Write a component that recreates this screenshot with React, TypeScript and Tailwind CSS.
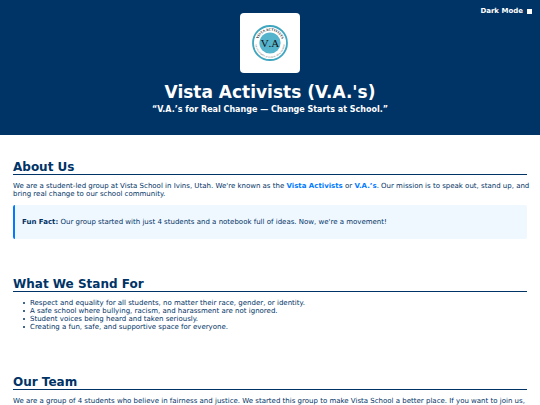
import { useState, type ReactNode } from 'react'
import clsx from 'clsx'

const values = [
  'Respect and equality for all students, no matter their race, gender, or identity.',
  'A safe school where bullying, racism, and harassment are not ignored.',
  'Student voices being heard and taken seriously.',
  'Creating a fun, safe, and supportive space for everyone.',
]

function Logo() {
  return (
    <svg viewBox="0 0 60 60" className="w-full" role="img" aria-label="Vista Activists logo">
      <defs>
        <path id="ring-top" d="M 17.6 30 A 12.4 12.4 0 0 1 42.4 30" />
        <path id="ring-bottom" d="M 15.2 30 A 14.8 14.8 0 0 0 44.8 30" />
      </defs>
      <circle cx="30" cy="30" r="17" fill="#fff" stroke="#3fa6c0" strokeWidth="1.8" />
      <circle cx="30" cy="30" r="10.6" fill="#55b3cb" />
      <g fontFamily="Liberation Serif, serif" textAnchor="middle">
        <text fontSize="3.6" fontWeight="bold" fill="#222">
          <textPath href="#ring-top" startOffset="50%">VISTA ACTIVISTS</textPath>
        </text>
        <text fontSize="2" fill="#444">
          <textPath href="#ring-bottom" startOffset="50%">CHANGE STARTS AT SCHOOL • REAL CHANGE</textPath>
        </text>
        <text x="30" y="34" fontSize="11" fill="#111" className="[font-kerning:none]">V.A</text>
      </g>
    </svg>
  )
}

function Section({ title, children }: { title: string; children: ReactNode }) {
  return (
    <section className="px-[13px] pt-[25px] pb-[13px]">
      <h2 className="mb-[7px] border-b border-current text-[12px] leading-[14px] font-bold">{title}</h2>
      {children}
    </section>
  )
}

export default function App() {
  const [dark, setDark] = useState(false)

  return (
    <div
      className={clsx(
        "min-h-screen font-['DejaVu_Sans',sans-serif] text-[7px] leading-[8px]",
        dark ? 'bg-[#121212] text-gray-100' : 'bg-white text-[#003366]'
      )}
    >
      <header className="relative flex flex-col items-center bg-[#003366] px-2 pt-[13px] pb-5 text-white">
        <label className="absolute top-[7px] right-2 flex items-center gap-1 font-bold">
          Dark Mode
          <input
            type="checkbox"
            checked={dark}
            onChange={(e) => setDark(e.target.checked)}
            className="size-[5px] appearance-none bg-white checked:bg-[#007bff]"
          />
        </label>
        <div className="w-[60px] rounded-[4px] bg-white">
          <Logo />
        </div>
        <h1 className="mt-[9px] text-[17px] leading-[20px] font-bold">Vista Activists (V.A.'s)</h1>
        <p className="mt-[3px] text-[8px] leading-[10px] font-bold">“V.A.’s for Real Change — Change Starts at School.”</p>
      </header>

      <main>
        <Section title="About Us">
          <p className="-mr-2">
            We are a student-led group at Vista School in Ivins, Utah. We're known as the{' '}
            <strong className="text-[#007bff]">Vista Activists</strong> or{' '}
            <strong className="text-[#007bff]">V.A.’s</strong>. Our mission is to speak out, stand up, and bring real
            change to our school community.
          </p>
          <div
            className={clsx(
              'mt-[7px] rounded-[2px] border-l-2 border-[#007bff] px-[7px] py-[13px]',
              dark ? 'bg-[#1e2a38]' : 'bg-[#f0f8ff]'
            )}
          >
            <p>
              <strong>Fun Fact:</strong> Our group started with just 4 students and a notebook full of ideas. Now, we're
              a movement!
            </p>
          </div>
        </Section>

        <Section title="What We Stand For">
          <ul className="mb-[6px] pl-[10px]">
            {values.map((value) => (
              <li
                key={value}
                className="flex items-center gap-[5px] before:size-[2px] before:rounded-full before:bg-current"
              >
                {value}
              </li>
            ))}
          </ul>
        </Section>

        <Section title="Our Team">
          <p className="-mr-2">
            We are a group of 4 students who believe in fairness and justice. We started this group to make Vista School
            a better place. If you want to join us,
          </p>
        </Section>
      </main>
    </div>
  )
}
